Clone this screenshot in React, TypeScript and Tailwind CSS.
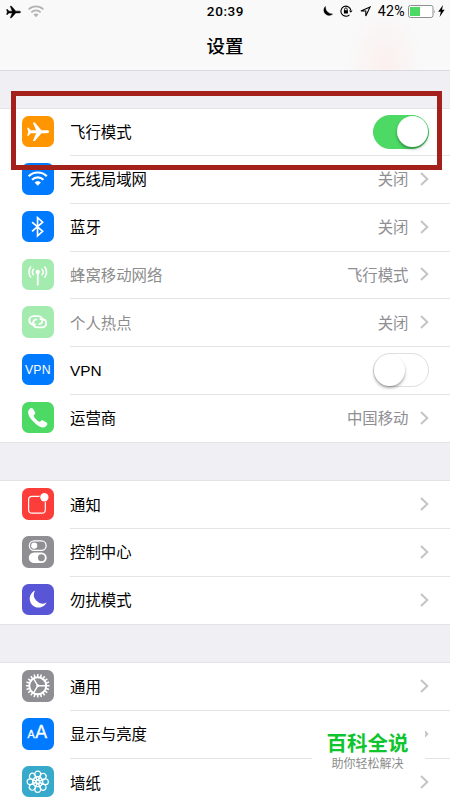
import type { ReactNode } from "react";
import { clsx } from "clsx";

type Row = {
  label: string;
  icon: ReactNode;
  color: string;
  value?: string;
  toggle?: boolean;
  disabled?: boolean;
};

const PLANE =
  "M28.4 16c0-.9-1-1.4-2.4-1.4h-5.400L13.800 6.700h-2l3.300 7.900H9.600L7.500 12H6l1.100 4L6 20h1.500l2.100-2.600h5.500l-3.300 7.900h2l6.800-7.900H26c1.400 0 2.400-.5 2.400-1.400z";

function WifiGlyph() {
  return (
    <>
      <path d="M6.8 13.4a13.1 13.1 0 0 1 18.4 0" stroke="currentColor" strokeWidth="2.2" fill="none" />
      <path d="M10.2 17a8.3 8.3 0 0 1 11.6 0" stroke="currentColor" strokeWidth="2.2" fill="none" />
      <path d="M12.8 19.9a4.6 4.6 0 0 1 6.4 0L16 23.2z" fill="currentColor" />
    </>
  );
}

function GearGlyph() {
  const teeth = Array.from({ length: 20 }, (_, i) => i * 18);
  return (
    <g stroke="white" fill="none">
      <circle cx="16" cy="16" r="8.6" strokeWidth="2" />
      {teeth.map((a) => (
        <path key={a} d="M16 7.4V4" strokeWidth="1.6" transform={`rotate(${a} 16 16)`} />
      ))}
      <path d="M16 16H25M16 16l-4.5-7.8M16 16l-4.5 7.8" strokeWidth="1.5" />
      <circle cx="16" cy="16" r="1.5" fill="white" stroke="none" />
    </g>
  );
}

function FlowerGlyph() {
  const petals = Array.from({ length: 8 }, (_, i) => i * 45);
  return (
    <g stroke="white" strokeWidth="1.2" fill="none">
      {petals.map((a) => (
        <g key={a} transform={`rotate(${a} 16 16)`}>
          <circle cx="16" cy="8.2" r="3" />
          <circle cx="16" cy="12.4" r="1.5" />
        </g>
      ))}
      <circle cx="16" cy="16" r="1.7" />
    </g>
  );
}

const groups: Row[][] = [
  [
    { label: "飞行模式", color: "bg-[#ff9500]", toggle: true, icon: <path d={PLANE} fill="white" transform="translate(-.8 0)" /> },
    { label: "无线局域网", color: "bg-[#007aff]", value: "关闭", icon: <WifiGlyph /> },
    {
      label: "蓝牙",
      color: "bg-[#007aff]",
      value: "关闭",
      icon: <path d="M10.2 11.3l10.8 9.3-5.2 4.6V6.8l5.2 4.6-10.8 9.3" stroke="white" strokeWidth="1.7" fill="none" />,
    },
    {
      label: "蜂窝移动网络",
      color: "bg-[#4cd964]",
      value: "飞行模式",
      disabled: true,
      icon: (
        <g stroke="white" strokeWidth="1.6" fill="none">
          <circle cx="16" cy="13.2" r="2.2" fill="white" stroke="none" />
          <path d="M16 14v13" strokeWidth="1.8" />
          <path d="M12 9.8a5.2 5.2 0 0 0 0 6.8M20 9.8a5.2 5.2 0 0 1 0 6.8M9.2 7.6a8.4 8.4 0 0 0 0 11.2M22.8 7.6a8.4 8.4 0 0 1 0 11.2" />
        </g>
      ),
    },
    {
      label: "个人热点",
      color: "bg-[#4cd964]",
      value: "关闭",
      disabled: true,
      icon: (
        <g stroke="white" strokeWidth="2" fill="none" strokeLinecap="round">
          <path d="M13.2 18.7h-1.6a4.2 4.2 0 0 1 0-8.4h5a4.2 4.2 0 0 1 3.6 6.4q-.8 1.3-2.6 1.7" />
          <path d="M18.8 13.3h1.6a4.2 4.2 0 0 1 0 8.4h-5a4.2 4.2 0 0 1-3.6-6.4q.8-1.3 2.6-1.7" />
        </g>
      ),
    },
    {
      label: "VPN",
      color: "bg-[#007aff]",
      toggle: false,
      icon: (
        <text x="16" y="20.3" textAnchor="middle" fontSize="12.5" fill="white" textLength="26">
          VPN
        </text>
      ),
    },
    {
      label: "运营商",
      color: "bg-[#4cd964]",
      value: "中国移动",
      icon: (
        <path
          d="M7.4 7.3c1.4-1.5 2.9-1.7 3.9-.2l2 3.3c.7 1.2-.2 2-1.3 3-.7.7.4 2.2 2.2 4.1s3.5 3.1 4.2 2.4c1-1.1 1.8-1.9 3-1.2l3.5 2.1c1.4.9 1 2.4-.5 3.9-2.5 2.5-6.8 1.2-12-3.9-5.4-5.3-7.9-10.6-5-13.5z"
          fill="white"
        />
      ),
    },
  ],
  [
    {
      label: "通知",
      color: "bg-[#fc3d39]",
      icon: (
        <>
          <rect x="6.7" y="8.5" width="17" height="17" rx="3.5" stroke="white" strokeWidth="1.2" fill="none" />
          <circle cx="22.7" cy="9.4" r="5" className="fill-[#fc3d39]" />
          <circle cx="22.7" cy="9.4" r="4.2" fill="white" />
        </>
      ),
    },
    {
      label: "控制中心",
      color: "bg-[#8e8e93]",
      icon: (
        <>
          <rect x="7.5" y="5" width="17" height="9.6" rx="4.8" stroke="white" strokeWidth="1.3" fill="none" />
          <circle cx="12.4" cy="9.8" r="3.1" fill="white" />
          <rect x="6.9" y="16.8" width="18.2" height="10.6" rx="5.3" fill="white" />
          <circle cx="19.7" cy="22.1" r="3.5" className="fill-[#8e8e93]" />
        </>
      ),
    },
    {
      label: "勿扰模式",
      color: "bg-[#5856d6]",
      icon: <path d="M13.3 6.7A9 9 0 1 0 25 18.7 8.7 8.7 0 0 1 13.3 6.7z" fill="white" />,
    },
  ],
  [
    { label: "通用", color: "bg-[#8e8e93]", icon: <GearGlyph /> },
    {
      label: "显示与亮度",
      color: "bg-[#007aff]",
      icon: (
        <g fill="white" stroke="white" strokeWidth=".3">
          <text x="5.5" y="20.8" fontSize="11">A</text>
          <text x="13.5" y="20.8" fontSize="18">A</text>
        </g>
      ),
    },
    { label: "墙纸", color: "bg-[#37aacb]", icon: <FlowerGlyph /> },
  ],
];

function Toggle({ on }: { on: boolean }) {
  return (
    <span
      className={clsx(
        "flex h-[34px] w-[56px] items-center rounded-full border-[1.5px]",
        on ? "justify-end border-[#4cd964] bg-[#4cd964]" : "border-[#dedede] bg-white"
      )}
    >
      <span className="size-[31px] rounded-full bg-white shadow-[0_2px_3px_rgba(0,0,0,0.35)]" />
    </span>
  );
}

function Chevron() {
  return (
    <svg width="9" height="16" viewBox="0 0 9 16" className="-mt-px ml-[11px] shrink-0">
      <path d="M1 2L7.3 8 1 14" stroke="#c4c4c8" strokeWidth="2" fill="none" />
    </svg>
  );
}

function SettingsRow({ row, last }: { row: Row; last: boolean }) {
  return (
    <div className="flex h-[47.7px] pl-[22px]">
      <div className={clsx("mt-[7px] size-[31.5px] shrink-0 overflow-hidden rounded-[6.5px]", row.color, row.disabled && "opacity-50")}>
        <svg viewBox="0 0 32 32" className="size-full text-white">
          {row.icon}
        </svg>
      </div>
      <div className={clsx("ml-[16.5px] flex flex-1 items-center pr-[21.5px]", !last && "border-b border-[#e4e4e6]")}>
        <span className={clsx("flex-1 pt-px text-[15.4px]", row.disabled ? "text-[#8c8c8c]" : "text-black")}>{row.label}</span>
        {row.value && <span className="pt-px text-[15.4px] text-[#8e8e93]">{row.value}</span>}
        {row.toggle === undefined ? <Chevron /> : <Toggle on={row.toggle} />}
      </div>
    </div>
  );
}

function StatusBar() {
  return (
    <div className="flex h-[23px] items-center justify-between pr-[5px] pl-[6px] text-black">
      <div className="flex w-[140px] items-center gap-[7px]">
        <svg width="15" height="14" viewBox="5 5 24 22">
          <path d={PLANE} stroke="black" strokeWidth=".8" />
        </svg>
        <svg width="16" height="13" viewBox="6 8 20 16" className="text-[#b4b4b4]">
          <WifiGlyph />
        </svg>
      </div>
      <span className="text-[13.5px] font-medium tracking-[0.6px]">20:39</span>
      <div className="flex w-[140px] items-center justify-end">
        <svg width="11" height="11" viewBox="0 0 11 11" className="shrink-0">
          <path d="M3.4.3A5.3 5.3 0 1 0 10.800 8Q7.800 8.200 5.500 5.900T3.400.3z" stroke="black" strokeWidth=".3" />
        </svg>
        <svg width="13" height="12" viewBox="0 0 13 12" fill="none" stroke="black" className="ml-[7px] shrink-0">
          <path d="M9.4 9.8A5 5 0 1 1 10.8 5" strokeWidth="1.1" />
          <path d="M9 5.4h3.6L10.8 7.8z" fill="black" stroke="none" />
          <path d="M4.6 5.5V4.2a1.3 1.3 0 0 1 2.6 0v1.3" strokeWidth=".9" />
          <path d="M3.9 5.2h4v3.3h-4z" fill="black" stroke="none" />
        </svg>
        <svg width="11" height="11" viewBox="0 0 11 11" fill="none" stroke="black" className="ml-[7px] shrink-0">
          <path d="M10.1.9L.9 5h4.9v5z" strokeWidth="1.1" />
        </svg>
        <span className="ml-[7px] text-[14.2px] tracking-[0.3px]">42%</span>
        <svg width="28" height="13" viewBox="0 0 28 13" className="ml-[3px] shrink-0">
          <rect x=".5" y=".5" width="24.5" height="12" rx="2" fill="white" stroke="#8f8f8f" />
          <path d="M2 2h10v9H2z" fill="#4cd964" />
          <path d="M26.3 4.5q1.2 2 0 4z" fill="#8f8f8f" />
        </svg>
        <svg width="7" height="12" viewBox="0 0 7 12" className="ml-[2px] shrink-0">
          <path d="M5 0L.2 6.7h2.600L1.600 12l5-7.200H4z" />
        </svg>
      </div>
    </div>
  );
}

export default function App() {
  return (
    <div className="relative h-[800px] w-[450px] overflow-hidden bg-[#efeff4] font-['Liberation_Sans','Noto_Sans_CJK_SC',sans-serif]">
      <header className="h-[71px] border-b border-[#d9d9de] bg-[#f9f9fa] bg-[radial-gradient(ellipse_40px_60px_at_385px_66px,#fbf0ee,transparent)] font-[Roboto,'Noto_Sans_CJK_SC',sans-serif]">
        <StatusBar />
        <h1 className="pt-[11px] text-center text-[18.5px] leading-[27px] font-medium">设置</h1>
      </header>

      <main className="flex flex-col gap-[37px] pt-[36.5px]">
        {groups.map((rows) => (
          <section key={rows[0].label} className="border-y border-[#e2e2e7] bg-white">
            {rows.map((row, i) => (
              <SettingsRow key={row.label} row={row} last={i === rows.length - 1} />
            ))}
          </section>
        ))}
      </main>

      <div className="absolute top-[91px] left-[11px] h-[79px] w-[431px] border-[5px] border-[#a4211b]" />

      <div className="absolute top-[725px] left-[312px] flex h-[47px] w-[113px] flex-col items-center bg-white pt-[6px]">
        <span className="-translate-x-px text-[20.5px] leading-[26px] font-bold text-[#0fc52f]">百科全说</span>
        <span className="-translate-x-px text-[12px] leading-[14px] text-[#8b8b8b]">助你轻松解决</span>
      </div>
    </div>
  );
}
